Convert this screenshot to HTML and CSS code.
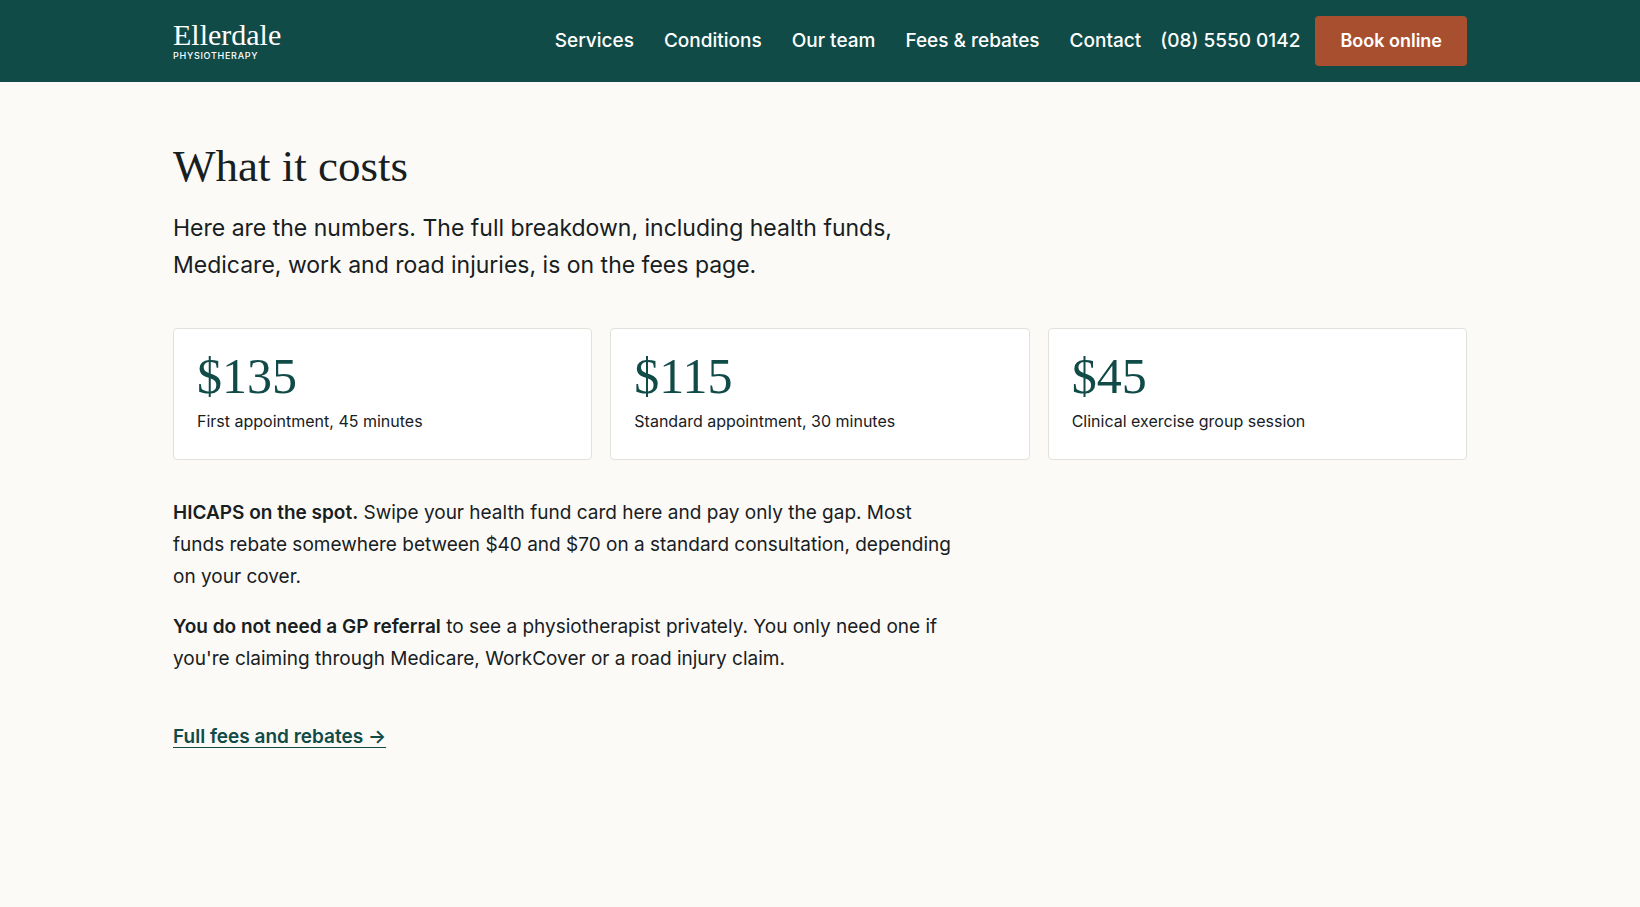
FILE: index.html
```html
<!DOCTYPE html>
<html lang="en-AU">
<head>
<meta charset="utf-8">
<meta name="viewport" content="width=device-width, initial-scale=1">
<title>Ellerdale Physiotherapy</title>
<link rel="stylesheet" href="styles.css">
</head>
<body>
<header class="site-header">
  <div class="wrap header-row">
    <a class="brand" href="#"><span class="brand-name">Ellerdale</span><span class="brand-sub">PHYSIOTHERAPY</span></a>
    <div class="header-actions">
      <nav class="nav" aria-label="Main">
        <a href="#">Services</a>
        <a href="#">Conditions</a>
        <a href="#">Our team</a>
        <a href="#">Fees &amp; rebates</a>
        <a href="#">Contact</a>
      </nav>
      <a class="phone" href="tel:0855500142">(08) 5550 0142</a>
      <a class="book" href="#">Book online</a>
    </div>
  </div>
</header>
<main class="wrap fees">
  <h1 class="title">What it costs</h1>
  <p class="lead">Here are the numbers. The full breakdown, including health funds, Medicare, work and road injuries, is on the fees page.</p>
  <ul class="prices">
    <li class="price"><span class="amount">$135</span><span class="label">First appointment, 45 minutes</span></li>
    <li class="price"><span class="amount">$115</span><span class="label">Standard appointment, 30 minutes</span></li>
    <li class="price"><span class="amount">$45</span><span class="label">Clinical exercise group session</span></li>
  </ul>
  <div class="notes">
    <p><strong>HICAPS on the spot.</strong> Swipe your health fund card here and pay only the gap. Most funds rebate somewhere between $40 and $70 on a standard consultation, depending on your cover.</p>
    <p><strong>You do not need a GP referral</strong> to see a physiotherapist privately. You only need one if you're claiming through Medicare, WorkCover or a road injury claim.</p>
  </div>
  <a class="more" href="#">Full fees and rebates →</a>
</main>
</body>
</html>
```
FILE: styles.css
```css
* { box-sizing: border-box; }
body {
  margin: 0;
  background: #fcfaf6;
  color: #17201f;
  font: 19px/32px Inter, "Liberation Sans", sans-serif;
}
a { color: inherit; text-decoration: none; }
.wrap {
  width: 100%;
  max-width: 1342px;
  margin: 0 auto;
  padding: 0 24px;
}
.site-header { background: #114b48; color: #fff; }
.header-row {
  display: flex;
  align-items: center;
  justify-content: space-between;
  padding-top: 16px;
  padding-bottom: 16px;
}
.brand { display: flex; flex-direction: column; }
.brand-name { font: 30px/30px "Liberation Serif", serif; }
.brand-sub { font-size: 9px; line-height: 12px; font-weight: 500; letter-spacing: 0.08em; }
.header-actions { display: flex; align-items: center; gap: 15px; }
.nav { display: flex; gap: 30px; margin-right: 4px; }
.nav, .phone { font-weight: 500; }
.book {
  padding: 9px 25px;
  border-radius: 4px;
  background: #a84f2f;
  font-size: 18px;
  font-weight: 600;
}
.fees { padding-top: 56px; padding-bottom: 96px; }
.title { margin: 0 0 16px; font: 500 45px/56px "Liberation Serif", serif; }
.lead { max-width: 740px; margin: 0 0 44px; font-size: 23px; line-height: 37px; }
.prices {
  display: grid;
  grid-template-columns: repeat(3, 1fr);
  gap: 18px;
  margin: 0 0 37px;
  padding: 0;
  list-style: none;
}
.price {
  display: flex;
  flex-direction: column;
  gap: 6px;
  padding: 23px;
  border: 1px solid #e2e2dc;
  border-radius: 4px;
  background: #fff;
}
.amount { color: #114b48; font: 50px/48px "Liberation Serif", serif; }
.label { font-size: 16px; line-height: 30px; }
.notes { max-width: 788px; margin-bottom: 46px; }
.notes p { margin: 0 0 18px; }
strong, .more { font-weight: 600; }
.more {
  color: #114b48;
  text-decoration: underline;
  text-decoration-thickness: 1px;
  text-underline-offset: 4px;
}
```
